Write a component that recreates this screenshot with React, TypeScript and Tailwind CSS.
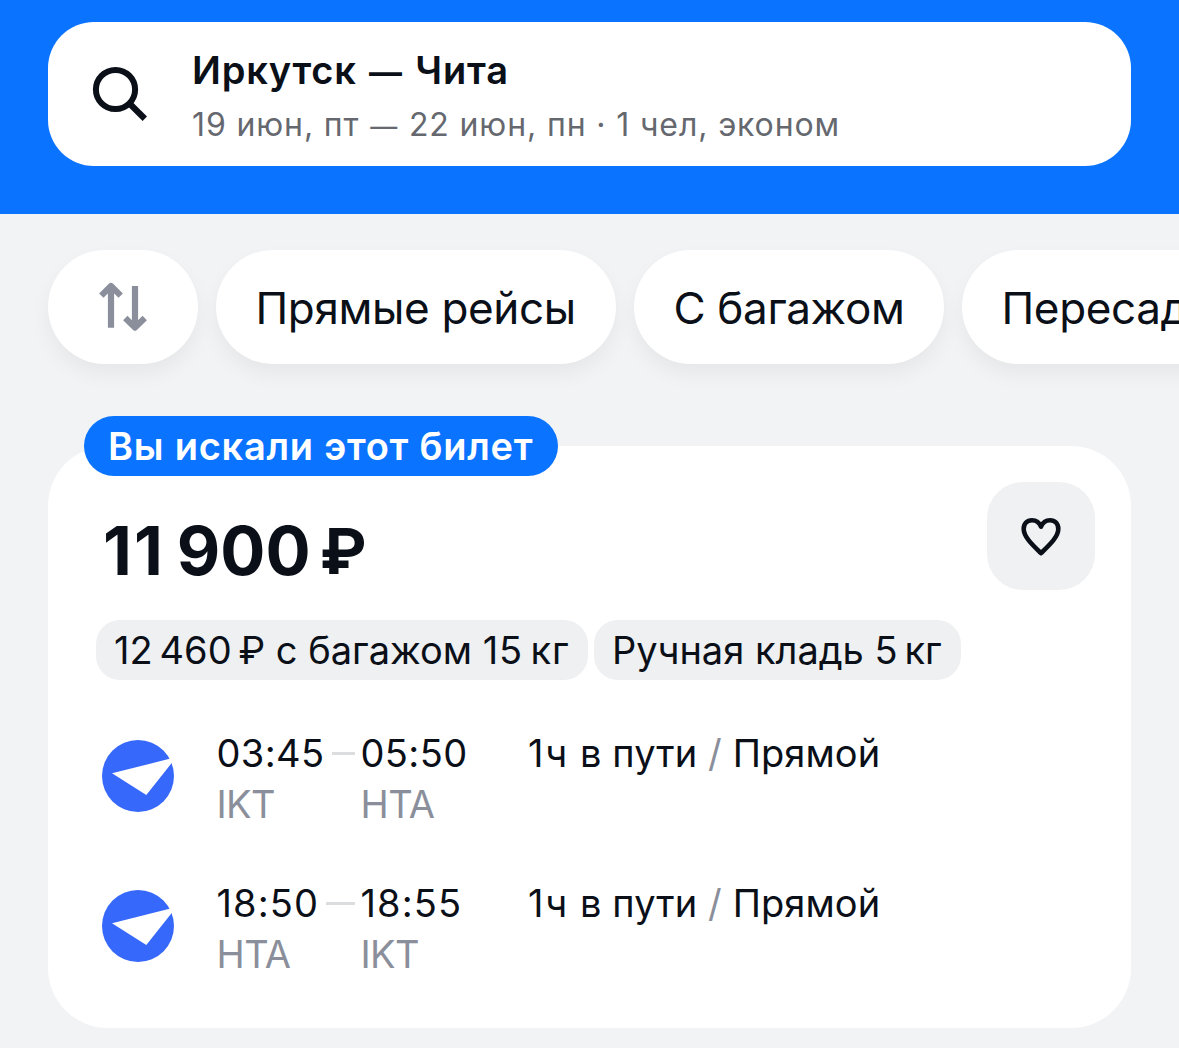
type Segment = {
  departure: string;
  arrival: string;
  from: string;
  to: string;
  hours: string;
  stops: string;
  timeClassName: string;
};

const filters = [
  { label: "Прямые рейсы", className: "w-[400px]" },
  { label: "С багажом", className: "w-[310px]" },
  { label: "Пересадки", className: "w-[320px]" }
];

const segments: Segment[] = [
  {
    departure: "03:45",
    arrival: "05:50",
    from: "IKT",
    to: "HTA",
    hours: "1ч",
    stops: "Прямой",
    timeClassName: "tracking-[0.4px]"
  },
  {
    departure: "18:50",
    arrival: "18:55",
    from: "HTA",
    to: "IKT",
    hours: "1ч",
    stops: "Прямой",
    timeClassName: "tracking-[1.1px]"
  }
];

function SearchIcon() {
  return (
    <svg className="size-[60px] shrink-0" viewBox="0 0 60 60" fill="none" stroke="#0a0f18">
      <circle cx="25.5" cy="25.5" r="19.6" strokeWidth="6" />
      <path d="M39.5 39.5L54.8 54.8" strokeWidth="6.2" />
    </svg>
  );
}

function SortIcon() {
  return (
    <svg
      className="h-[50px] w-[50px]"
      viewBox="0 0 50 50"
      fill="none"
      stroke="#8a8f9b"
      strokeWidth="6.2"
      strokeLinejoin="round"
    >
      <path d="M13 45.7V4.5M3.3 13.6L13 4L22.7 13.6" />
      <path d="M37 4V45M27.3 36L37 45.6L46.7 36" />
    </svg>
  );
}

function HeartIcon() {
  return (
    <svg
      className="h-[40px] w-[40px]"
      viewBox="0 0 40 40"
      fill="none"
      stroke="#0a0f18"
      strokeWidth="4.6"
      strokeLinejoin="round"
      strokeLinecap="round"
    >
      <path d="M20 10.6C18.2 6.2 14.8 4.2 11 4.2C6 4.2 2.7 7.8 2.7 13C2.7 20.5 10.5 28 20 37.2C29.5 28 37.3 20.5 37.3 13C37.3 7.8 34 4.2 29 4.2C25.2 4.2 21.8 6.2 20 10.6Z" />
    </svg>
  );
}

function AirlineLogo() {
  return (
    <svg className="size-[72px]" viewBox="0 0 72 72">
      <circle cx="36" cy="36" r="36" fill="#3668fb" />
      <path d="M10 33.3L68.5 18.6Q71 19.5 70.5 22L44.3 55Z" fill="#fff" />
    </svg>
  );
}

function SegmentRow({ segment }: { segment: Segment }) {
  return (
    <div className="flex h-[100px] items-start">
      <div className="mt-[12px] ml-[6px] w-[114.5px] shrink-0">
        <AirlineLogo />
      </div>
      <div className="w-[311.5px] text-[38px]">
        <div className={`flex leading-[50px] ${segment.timeClassName}`}>
          <div className="flex w-[144px] items-center">
            <span>{segment.departure}</span>
            <span className="mr-[6px] ml-[7px] h-[3px] flex-1 bg-[#dcdddf]" />
          </div>
          <span>{segment.arrival}</span>
        </div>
        <div className="flex pt-px leading-[50px] tracking-[-0.6px] text-[#8a8f9b]">
          <span className="w-[144px]">{segment.from}</span>
          <span>{segment.to}</span>
        </div>
      </div>
      <p className="text-[38px] leading-[50px] tracking-[0.1px] whitespace-nowrap">
        <span className="tracking-[1.9px]">{segment.hours}</span> в пути{" "}
        <span className="text-[#8a8f9b]">/</span> {segment.stops}
      </p>
    </div>
  );
}

export default function App() {
  return (
    <div className="h-[1048px] w-[1179px] overflow-hidden bg-[#f1f3f5] font-['Inter',sans-serif] text-[#0a0f18]">
      <header className="h-[214px] bg-[#0a73ff] px-[48px] pt-[22px]">
        <div className="flex h-[144px] items-center rounded-[46px] bg-white pl-[42px]">
          <SearchIcon />
          <div className="ml-[42px] pt-[6px] whitespace-nowrap">
            <h1 className="text-[38px] leading-[56px] font-semibold tracking-[0.8px]">
              Иркутск <span className="mx-[2px] text-[33px] font-bold">—</span> Чита
            </h1>
            <p className="text-[32px] leading-[50px] tracking-[0.87px] text-[#65686e]">
              19 июн, пт <span className="mx-px text-[27px]">—</span> 22 июн, пн · 1 чел, эконом
            </p>
          </div>
        </div>
      </header>

      <div className="flex gap-[18px] pt-[36px] pl-[48px]">
        <button
          type="button"
          className="flex h-[114px] w-[150px] shrink-0 items-center justify-center rounded-full bg-white shadow-[0_10px_20px_rgba(0,0,0,0.05)]"
        >
          <SortIcon />
        </button>
        {filters.map((filter) => (
          <button
            key={filter.label}
            type="button"
            className={`h-[114px] shrink-0 rounded-full bg-white pt-px pl-[39.5px] text-left text-[44px] tracking-[-0.35px] whitespace-nowrap shadow-[0_10px_20px_rgba(0,0,0,0.05)] ${filter.className}`}
          >
            {filter.label}
          </button>
        ))}
      </div>

      <main className="relative mx-[48px] mt-[82px] h-[582px] rounded-[60px] bg-white px-[48px] pt-[36px]">
        <div className="absolute -top-[30px] left-[36px] flex h-[60px] w-[474px] items-center rounded-full bg-[#0a73ff] pl-[24px] text-[38px] font-semibold tracking-[0.75px] whitespace-nowrap text-white">
          Вы искали этот билет
        </div>
        <div className="flex h-[138px] justify-between">
          <p className="ml-[7px] pt-[29px] text-[67px] leading-[80px] font-bold whitespace-nowrap">
            <span className="tracking-[2px]">11</span>
            <span className="ml-[12px]">900</span>
            <span className="relative -top-px ml-[9px] text-[63px] font-bold">₽</span>
          </p>
          <button
            type="button"
            className="-mr-[12px] flex size-[108px] items-center justify-center rounded-[36px] bg-[#eff1f2]"
          >
            <HeartIcon />
          </button>
        </div>
        <div className="flex gap-[6px] text-[38px] leading-[60px] whitespace-nowrap">
          <span className="h-[60px] w-[492px] rounded-[24px] bg-[#eff0f1] pl-[18px]">
            12&#8201;460&#8201;₽ с багажом <span className="tracking-[0.8px]">15&#8201;кг</span>
          </span>
          <span className="h-[60px] w-[367px] rounded-[24px] bg-[#eff0f1] pl-[18px]">
            Ручная кладь 5&#8201;кг
          </span>
        </div>
        <div className="mt-[48px] flex flex-col gap-[50px]">
          {segments.map((segment) => (
            <SegmentRow key={segment.departure} segment={segment} />
          ))}
        </div>
      </main>
    </div>
  );
}
